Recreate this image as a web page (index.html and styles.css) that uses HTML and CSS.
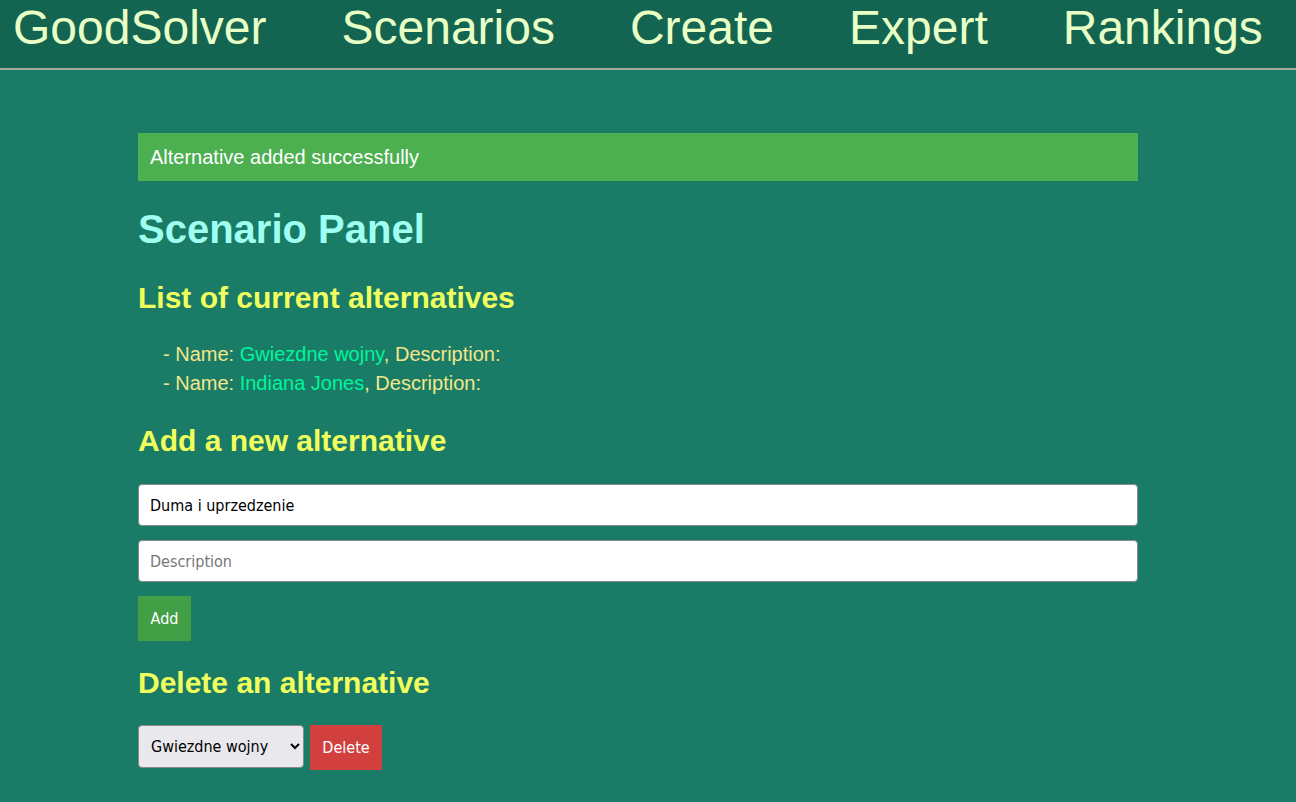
FILE: index.html
```html
<!DOCTYPE html>
<html lang="en">
<head>
<meta charset="utf-8">
<title>Scenario Panel</title>
<link rel="stylesheet" href="styles.css">
</head>
<body>
<nav class="nav">
  <a class="nav-link" href="#">GoodSolver</a>
  <a class="nav-link" href="#">Scenarios</a>
  <a class="nav-link" href="#">Create</a>
  <a class="nav-link" href="#">Expert</a>
  <a class="nav-link" href="#">Rankings</a>
</nav>
<main class="container">
  <div class="alert">Alternative added successfully</div>
  <h1 class="title">Scenario Panel</h1>
  <h2 class="section section-list">List of current alternatives</h2>
  <ul class="alt-list">
    <li>- Name: <span class="alt-name">Gwiezdne wojny</span>, Description:</li>
    <li>- Name: <span class="alt-name">Indiana Jones</span>, Description:</li>
  </ul>
  <h2 class="section section-add">Add a new alternative</h2>
  <form class="add-form">
    <input class="field" type="text" value="Duma i uprzedzenie">
    <input class="field" type="text" placeholder="Description">
    <div><button class="btn btn-add" type="button">Add</button></div>
  </form>
  <h2 class="section section-delete">Delete an alternative</h2>
  <form class="delete-form">
    <select class="picker">
      <option>Gwiezdne wojny</option>
      <option>Indiana Jones</option>
    </select>
    <button class="btn btn-delete" type="button">Delete</button>
  </form>
</main>
</body>
</html>
```
FILE: styles.css
```css
* { box-sizing: border-box; }

body {
  margin: 0;
  background: #1a7c66;
  font-family: "Liberation Sans", Arial, sans-serif;
}

.nav {
  display: flex;
  gap: 75px;
  height: 70px;
  padding-left: 13px;
  background: #146452;
  border-bottom: 2px solid #a9aa9c;
}

.nav-link {
  font-size: 48px;
  line-height: 55px;
  color: #e8ffc6;
  text-decoration: none;
}

.container {
  width: 1000px;
  margin: 63px 0 0 138px;
}

.alert {
  height: 48px;
  display: flex;
  align-items: center;
  padding: 0 12px;
  background: #4caf50;
  color: #ffffff;
  font-size: 20px;
}

.title {
  margin: 25px 0 0;
  font-size: 40px;
  line-height: 46px;
  color: #9ffff0;
}

.section {
  margin: 28px 0 0;
  font-size: 30px;
  line-height: 34px;
  color: #f0ff5e;
}

.section-list { margin-top: 29px; }

.section-add { margin-top: 26px; }

.alt-list {
  list-style: none;
  margin: 24.5px 0 0;
  padding-left: 25px;
  font-size: 20px;
  line-height: 29.3px;
  color: #f2e68c;
}

.alt-name { color: #00f59c; }

.add-form {
  display: flex;
  flex-direction: column;
  gap: 14px;
  margin-top: 26px;
}

.field {
  width: 100%;
  height: 42px;
  padding: 0 11px;
  border: 1px solid #8a8a8a;
  border-radius: 4px;
  background: #ffffff;
  color: #000000;
  font-family: "DejaVu Sans Condensed", "DejaVu Sans", sans-serif;
  font-size: 16px;
  font-stretch: condensed;
}

.field::placeholder { color: #767676; }

.btn {
  height: 45px;
  border: none;
  padding: 0 12px;
  color: #ffffff;
  font-family: "DejaVu Sans Condensed", "DejaVu Sans", sans-serif;
  font-size: 16px;
  font-stretch: condensed;
}

.btn-add {
  width: 53px;
  background: #439f46;
}

.section-delete { margin-top: 25px; }

.delete-form {
  display: flex;
  align-items: flex-start;
  gap: 6px;
  margin-top: 25px;
}

.picker {
  width: 166px;
  height: 43px;
  padding: 0 6px 0 8px;
  border: 1px solid #8a8a8a;
  border-radius: 4px;
  background-color: #e9e8ed;
  color: #000000;
  font-family: "DejaVu Sans Condensed", "DejaVu Sans", sans-serif;
  font-size: 16px;
  font-stretch: condensed;
}

.btn-delete {
  width: 72px;
  background: #d13f3f;
}
```
